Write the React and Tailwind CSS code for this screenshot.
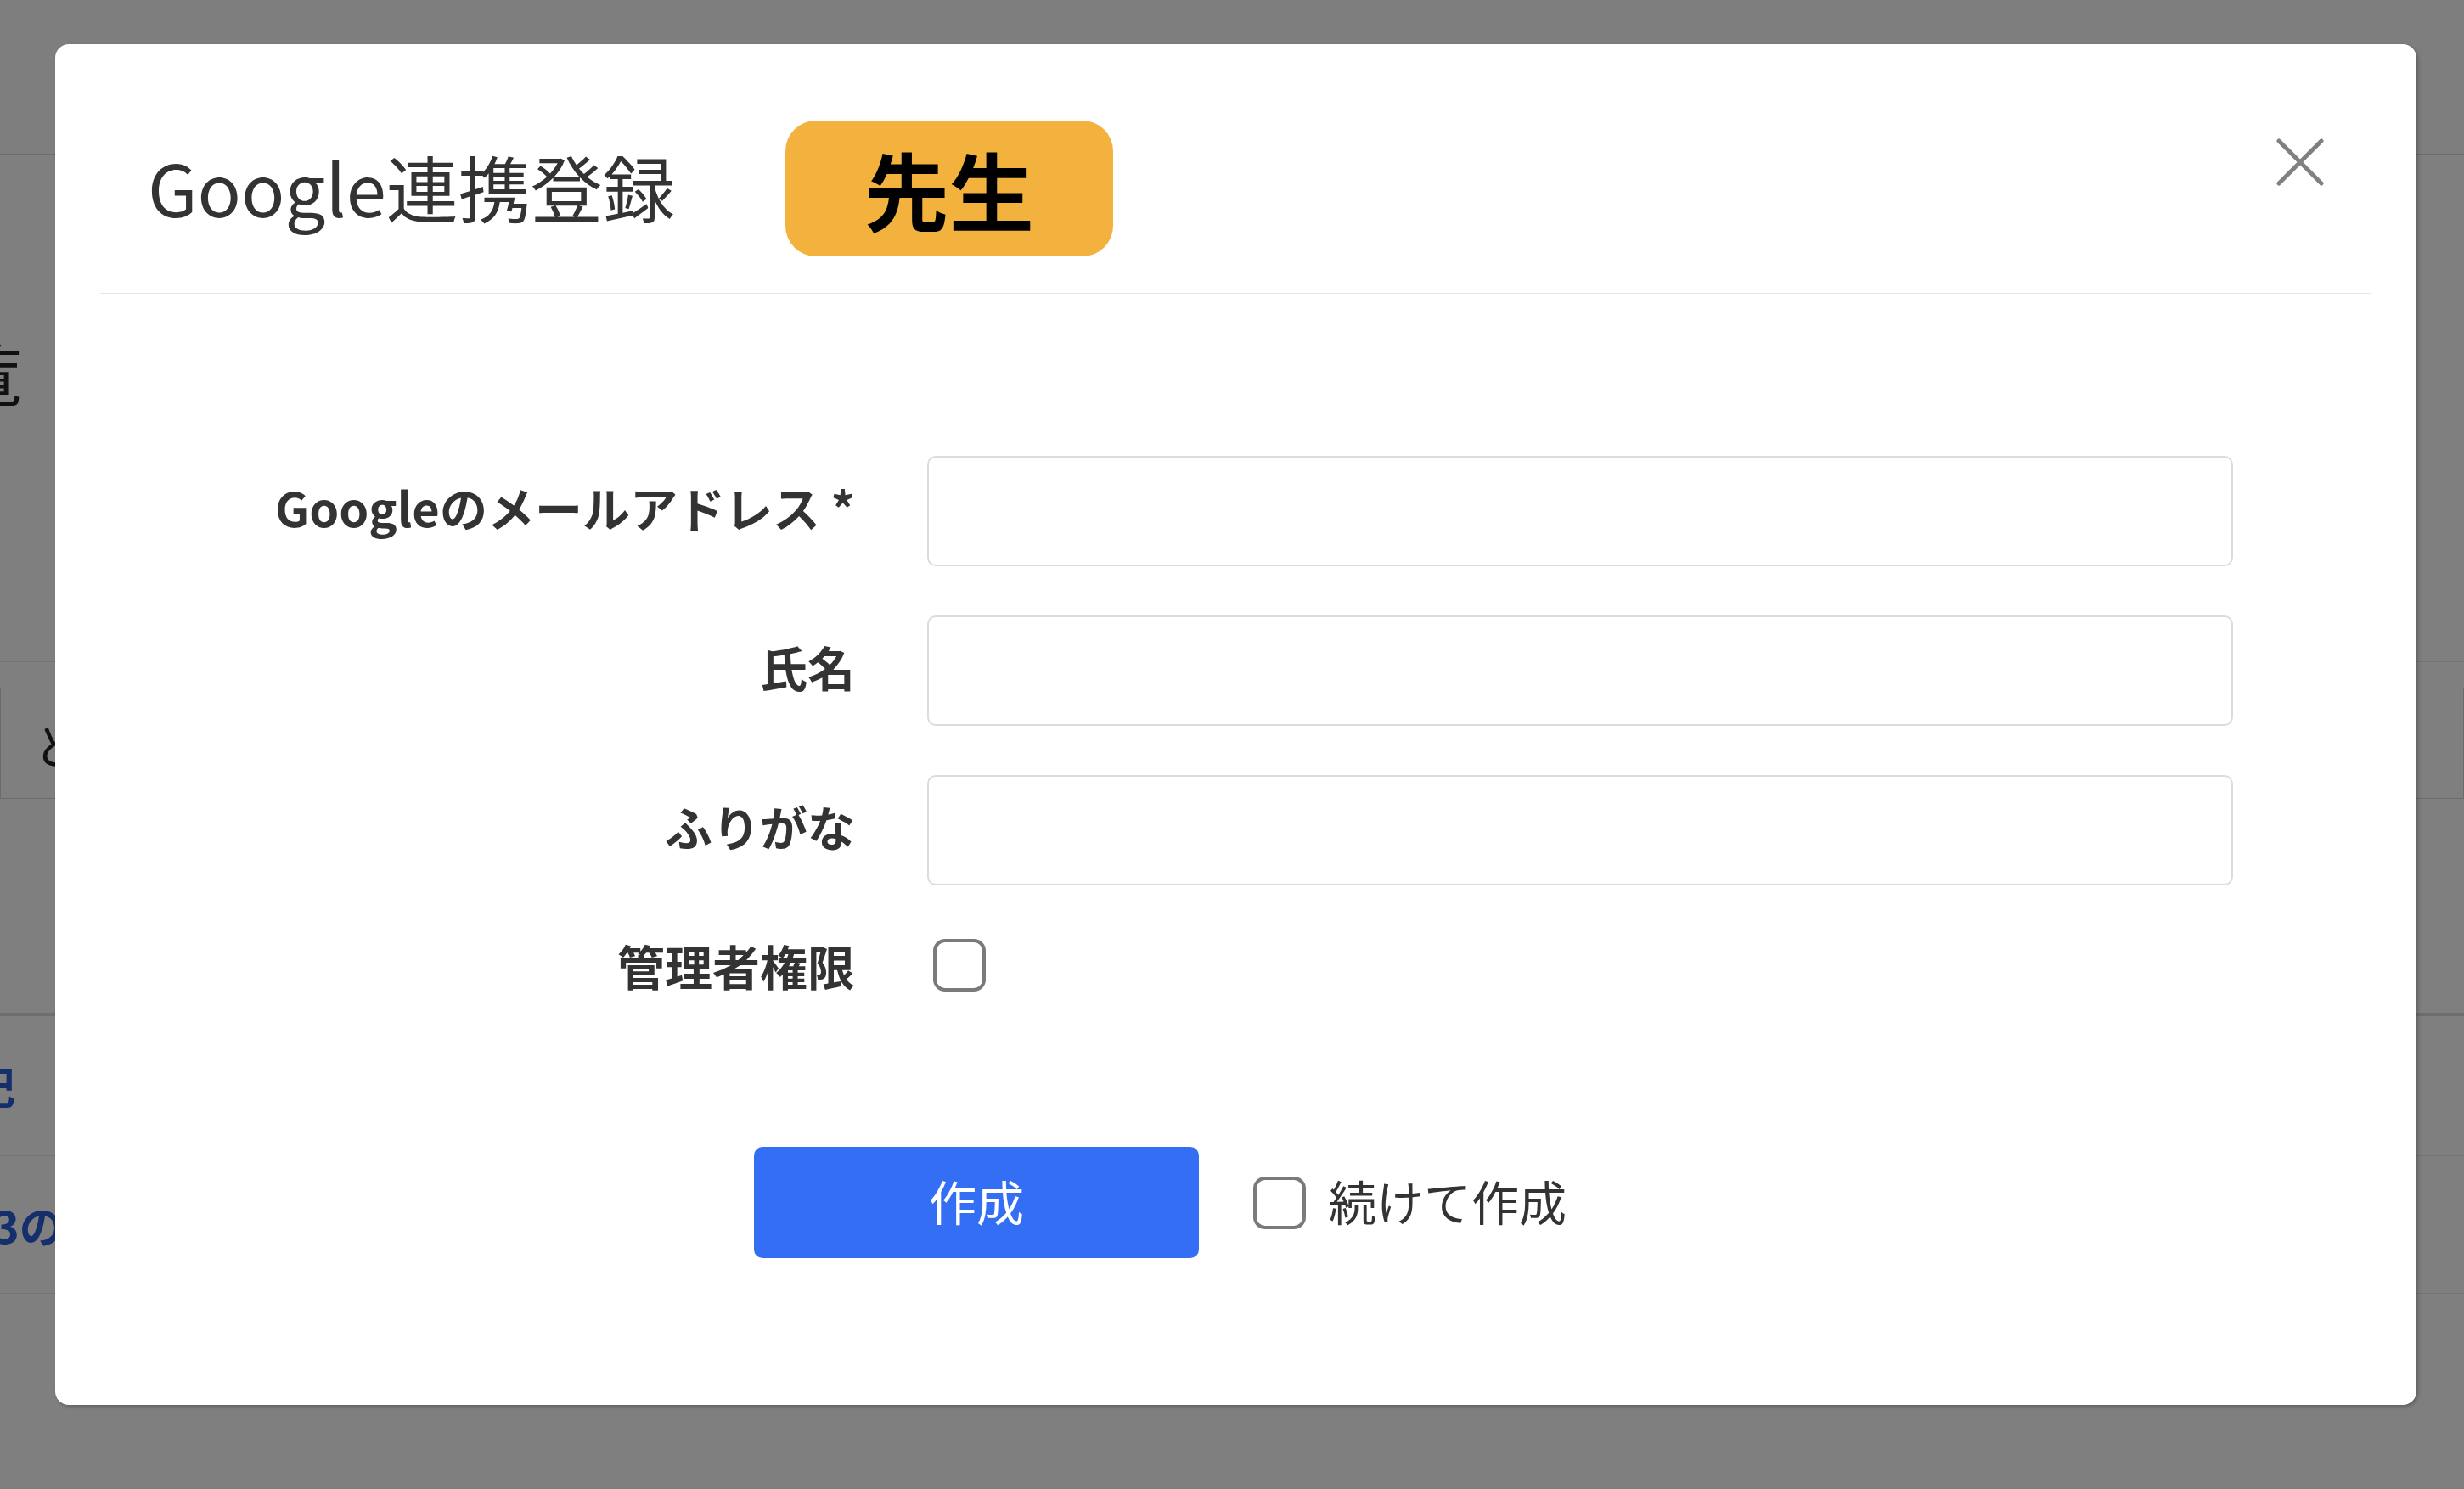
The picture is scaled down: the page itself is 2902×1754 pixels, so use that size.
import { useState } from "react"

const font = { fontFamily: '"Noto Sans CJK JP", "Noto Sans", sans-serif' }

// 背景のページ（オーバーレイの下）
const BackgroundPage = () => (
  <div className="h-[1754px] w-full overflow-hidden bg-white">
    <div className="h-[183px] border-b-2 border-[#d8d8d8] bg-[#fcfcfc]" />
    <div className="flex h-[383px] items-start border-b border-[#e6e6e6] pt-[214px]">
      <h1 className="-ml-[134px] text-[80px] leading-none text-[#222]">一覧</h1>
    </div>
    <div className="h-[214px] border-b border-[#e6e6e6]" />
    <div className="mt-[30px] flex h-[131px] items-center border border-[#d6d6d6] pl-[40px] text-[56px] text-[#222]">
      どの
    </div>
    <div className="h-[256px] border-b-4 border-[#dcdcdc]" />
    <div className="flex h-[165px] items-center border-b border-[#e6e6e6]">
      <span className="-ml-[34px] text-[52px] font-bold text-[#2b5fd9]">記</span>
    </div>
    <div className="flex h-[162px] items-center border-b border-[#e6e6e6]">
      <span className="-ml-[8px] text-[52px] font-bold text-[#2b5fd9]">3の</span>
    </div>
  </div>
)

const Checkbox = ({ checked, onChange }) => (
  <button
    type="button"
    onClick={onChange}
    className="flex h-[62px] w-[62px] shrink-0 items-center justify-center rounded-[14px] border-[4px] border-[#7a7a7a] bg-white"
  >
    {checked && (
      <svg width="40" height="40" viewBox="0 0 24 24" fill="none" stroke="#333" strokeWidth="3" strokeLinecap="round" strokeLinejoin="round">
        <path d="M5 12l5 5 9-10" />
      </svg>
    )}
  </button>
)

const Field = ({ label }) => (
  <div className="flex items-center">
    <label className="w-[1027px] pr-[85px] pb-[10px] text-right text-[56px] leading-none font-bold text-[#333]">{label}</label>
    <input
      type="text"
      className="h-[130px] w-[1538px] rounded-[10px] border-2 border-[#dadcdf] px-6 text-[52px] outline-none"
    />
  </div>
)

export default function App() {
  const [isAdmin, setIsAdmin] = useState(false)
  const [keepCreating, setKeepCreating] = useState(false)

  return (
    <div className="relative h-[1754px] w-[2902px] overflow-hidden" style={font}>
      <BackgroundPage />

      {/* モーダル */}
      <div className="absolute inset-0 bg-black/50 pl-[65px] pt-[52px]">
        <div className="h-[1603px] w-[2781px] rounded-[16px] bg-white shadow-[2px_2px_4px_rgba(0,0,0,0.25)]">
          {/* ヘッダー */}
          <div className="mx-[53px] flex h-[294px] items-start justify-between border-b border-[#e3e6ea] pl-[56px] pr-[56px]">
            <div className="flex items-center pt-[90px]">
              <h2 className="pb-[8px] text-[85px] leading-none font-normal text-[#333]">Google連携登録</h2>
              <div className="ml-[130px] flex h-[160px] w-[386px] items-center justify-center rounded-[36px] bg-[#f2b23d]">
                <span className="text-[100px] leading-none font-bold text-black">先生</span>
              </div>
            </div>
            <button type="button" className="mt-[111px]">
              <svg width="56" height="56" viewBox="0 0 56 56" fill="none" stroke="#808080" strokeWidth="5" strokeLinecap="round">
                <path d="M3 3L53 53M53 3L3 53" />
              </svg>
            </button>
          </div>

          {/* フォーム */}
          <div className="flex flex-col pt-[191px]">
            <div className="flex flex-col gap-[58px]">
              <Field label="Googleのメールアドレス *" />
              <Field label="氏名" />
              <Field label="ふりがな" />
            </div>
            <div className="mt-[63px] flex h-[62px] items-center">
              <label className="w-[1027px] pr-[85px] text-right text-[56px] leading-none font-bold text-[#333]">管理者権限</label>
              <div className="pl-[7px]">
                <Checkbox checked={isAdmin} onChange={() => setIsAdmin(!isAdmin)} />
              </div>
            </div>
            <div className="mt-[183px] flex items-center pl-[823px]">
              <button
                type="button"
                className="h-[131px] w-[524px] rounded-[10px] bg-[#346ef4] pb-[6px] text-[56px] leading-none text-white"
              >
                作成
              </button>
              <div className="ml-[64px] flex items-center gap-[27px]">
                <Checkbox checked={keepCreating} onChange={() => setKeepCreating(!keepCreating)} />
                <span className="pb-[6px] text-[56px] leading-none text-[#333]">続けて作成</span>
              </div>
            </div>
          </div>
        </div>
      </div>
    </div>
  )
}
